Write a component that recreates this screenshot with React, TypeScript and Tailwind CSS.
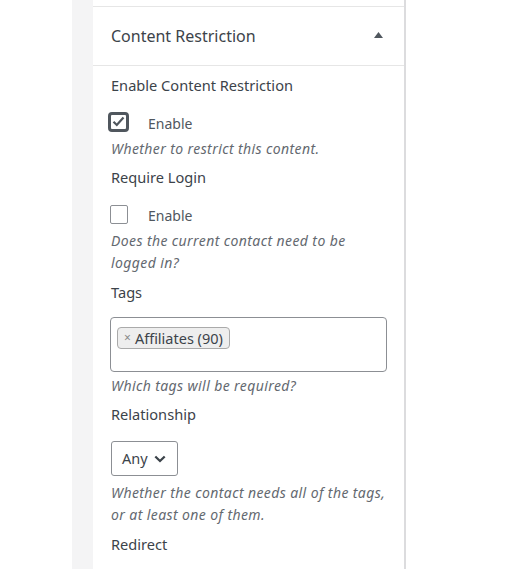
import React from "react";

function Desc({ lines }: { lines: string[] }) {
  return (
    <div className="text-[14px] leading-[22px] italic tracking-[0.4px] text-[#646970]">
      {lines.map((l) => (
        <div key={l} className="whitespace-nowrap">
          {l}
        </div>
      ))}
    </div>
  );
}

function Label({ children, className = "" }: { children: React.ReactNode; className?: string }) {
  return <div className={`text-[14.6px] leading-[20px] text-[#3c434a] ${className}`}>{children}</div>;
}

export default function App() {
  return (
    <div
      className="h-[569px] overflow-hidden bg-white flex"
      style={{ fontFamily: '"Noto Sans", "Open Sans", sans-serif' }}
    >
      <div className="w-[72px] shrink-0" />
      <div className="w-[21px] shrink-0 bg-[#f4f4f5]" />
      <div className="w-[313px] shrink-0 border-r-2 border-[#dcdcde] flex flex-col">
        <div className="h-[6px]" />
        <div className="border-t border-[#e6e6e6] h-[59px] flex items-center justify-between pl-[18px] pr-[21px]">
          <span className="text-[16px] font-normal text-[#3c434a]">Content Restriction</span>
          <svg width="9" height="6" viewBox="0 0 9 6" className="mb-[2px]">
            <path d="M4.5 0 L9 6 L0 6 Z" fill="#50575e" />
          </svg>
        </div>
        <div className="border-t border-[#e6e6e6] pl-[18px] pr-[17px]">
          <Label className="mt-[9px]">Enable Content Restriction</Label>
          <div className="mt-[17px] flex items-center h-[19px]">
            <div className="w-[21px] h-[20px] -ml-[3px] rounded-[4px] border-[3px] border-[#50575e] flex items-center justify-center">
              <svg width="13" height="11" viewBox="0 0 13 11">
                <path d="M1.5 5.8 L4.8 9 L11.5 1.5" fill="none" stroke="#50575e" strokeWidth="2.2" />
              </svg>
            </div>
            <span className="ml-[19px] mt-[3px] text-[14px] text-[#50575e]">Enable</span>
          </div>
          <div className="mt-[7px]">
            <Desc lines={["Whether to restrict this content."]} />
          </div>
          <Label className="mt-[7px]">Require Login</Label>
          <div className="mt-[18px] flex items-center h-[19px]">
            <div className="w-[18px] h-[19px] -ml-[1px] rounded-[2px] border-[1.5px] border-[#8c8f94] bg-white" />
            <span className="ml-[20px] mt-[2px] text-[14px] text-[#50575e]">Enable</span>
          </div>
          <div className="mt-[6px]">
            <Desc lines={["Does the current contact need to be", "logged in?"]} />
          </div>
          <Label className="mt-[8px]">Tags</Label>
          <div className="mt-[15px] -ml-[1px] h-[55px] w-[277px] border border-[#8c8f94] rounded-[4px] pt-[6px] pl-[6px]">
            <span className="inline-flex items-center h-[22px] px-[6px] rounded-[4px] border border-[#aaaaaa] bg-[#eeeeee] text-[14.5px] text-[#3c434a] leading-none">
              <span className="text-[12px] text-[#888888] mr-[4px]">×</span>
              Affiliates (90)
            </span>
          </div>
          <div className="mt-[3px]">
            <Desc lines={["Which tags will be required?"]} />
          </div>
          <Label className="mt-[7px]">Relationship</Label>
          <div className="mt-[17px] w-[67px] h-[35px] border border-[#8c8f94] rounded-[3px] flex items-center pl-[10px]">
            <span className="text-[14.5px] text-[#3c434a]">Any</span>
            <svg width="12" height="8" viewBox="0 0 12 8" className="ml-[6px]">
              <path d="M1.3 1.5 L6 6 L10.7 1.5" fill="none" stroke="#3c434a" strokeWidth="2.3" />
            </svg>
          </div>
          <div className="mt-[6px]">
            <Desc lines={["Whether the contact needs all of the tags,", "or at least one of them."]} />
          </div>
          <Label className="mt-[8px]">Redirect</Label>
        </div>
      </div>
    </div>
  );
}
